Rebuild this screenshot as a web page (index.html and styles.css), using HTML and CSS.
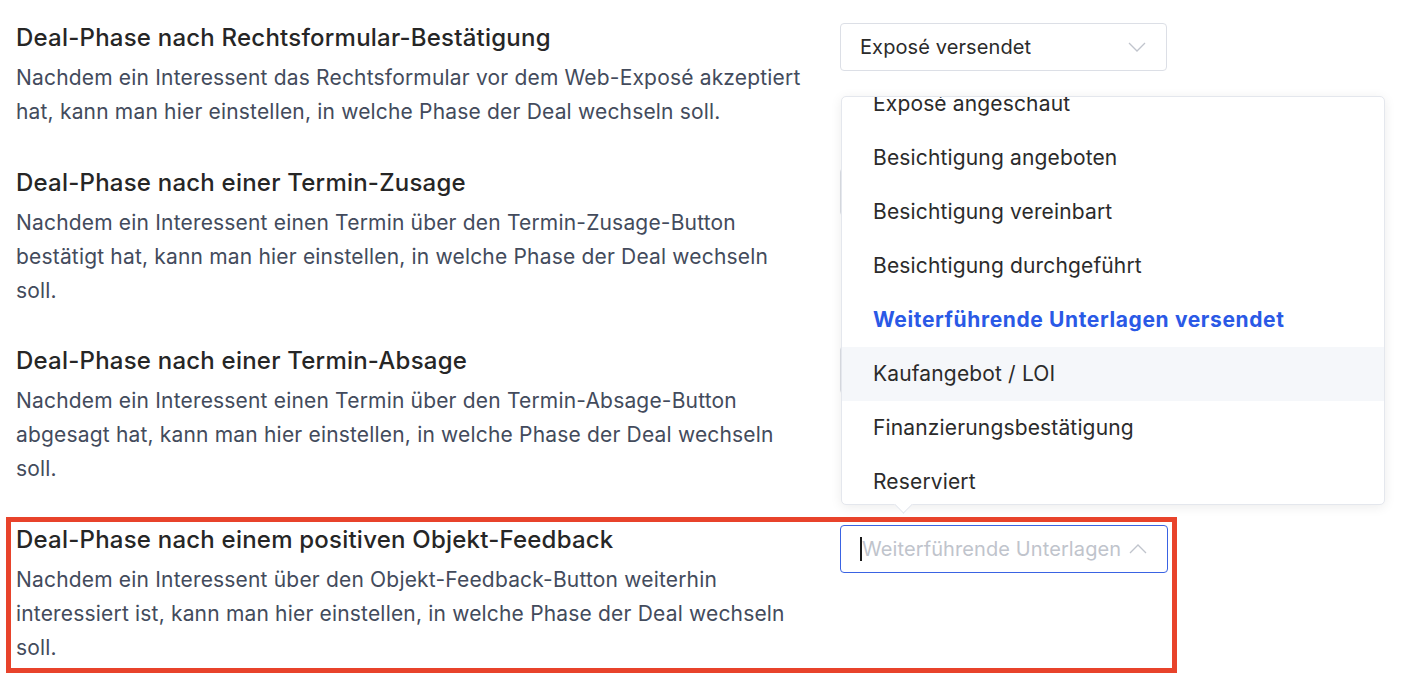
FILE: index.html
```html
<!DOCTYPE html>
<html lang="de">
    <head>
        <meta charset="UTF-8">
        <meta name="viewport" content="width=device-width, initial-scale=1.0">
        <title>Deal-Phasen</title>
        <link rel="stylesheet" href="styles.css">
    </head>
    <body>
        <div class="settings">
            <div class="setting-row">
                <div class="setting-text">
                    <h3 class="setting-title">Deal-Phase nach Rechtsformular-Bestätigung</h3>
                    <p class="setting-desc">Nachdem ein Interessent das Rechtsformular vor dem Web-Exposé akzeptiert hat, kann man hier einstellen, in welche Phase der Deal wechseln soll.</p>
                </div>
                <div class="select">
                    <span class="select-value">Exposé versendet</span>
                    <svg class="select-arrow" width="18" height="10" viewBox="0 0 18 10"><path d="M1 1l8 8 8-8" fill="none" stroke="#c0c4cc" stroke-width="1.3"/></svg>
                </div>
            </div>

            <div class="setting-row">
                <div class="setting-text">
                    <h3 class="setting-title">Deal-Phase nach einer Termin-Zusage</h3>
                    <p class="setting-desc">Nachdem ein Interessent einen Termin über den Termin-Zusage-Button bestätigt hat, kann man hier einstellen, in welche Phase der Deal wechseln soll.</p>
                </div>
                <div class="select">
                    <span class="select-value">Besichtigung vereinbart</span>
                    <svg class="select-arrow" width="18" height="10" viewBox="0 0 18 10"><path d="M1 1l8 8 8-8" fill="none" stroke="#c0c4cc" stroke-width="1.3"/></svg>
                </div>
            </div>

            <div class="setting-row">
                <div class="setting-text">
                    <h3 class="setting-title">Deal-Phase nach einer Termin-Absage</h3>
                    <p class="setting-desc">Nachdem ein Interessent einen Termin über den Termin-Absage-Button abgesagt hat, kann man hier einstellen, in welche Phase der Deal wechseln soll.</p>
                </div>
                <div class="select">
                    <span class="select-value">Exposé angeschaut</span>
                    <svg class="select-arrow" width="18" height="10" viewBox="0 0 18 10"><path d="M1 1l8 8 8-8" fill="none" stroke="#c0c4cc" stroke-width="1.3"/></svg>
                </div>
            </div>

            <div class="setting-row marked">
                <div class="setting-text">
                    <h3 class="setting-title">Deal-Phase nach einem positiven Objekt-Feedback</h3>
                    <p class="setting-desc">Nachdem ein Interessent über den Objekt-Feedback-Button weiterhin interessiert ist, kann man hier einstellen, in welche Phase der Deal wechseln soll.</p>
                </div>
                <div class="select-wrap">
                    <div class="dropdown">
                        <ul class="dropdown-list">
                            <li>Exposé angeschaut</li>
                            <li>Besichtigung angeboten</li>
                            <li>Besichtigung vereinbart</li>
                            <li>Besichtigung durchgeführt</li>
                            <li class="selected">Weiterführende Unterlagen versendet</li>
                            <li class="hover">Kaufangebot / LOI</li>
                            <li>Finanzierungsbestätigung</li>
                            <li>Reserviert</li>
                        </ul>
                        <span class="dropdown-arrow"></span>
                    </div>
                    <div class="select is-open">
                        <span class="select-value placeholder"><span class="caret"></span>Weiterführende Unterlagen versendet</span>
                        <svg class="select-arrow" width="18" height="10" viewBox="0 0 18 10"><path d="M1 9l8-8 8 8" fill="none" stroke="#c0c4cc" stroke-width="1.3"/></svg>
                    </div>
                </div>
            </div>
        </div>
    </body>
</html>
```

FILE: styles.css
```css
body{
    margin:0;
    background:#fff;
    font-family:Inter,"Noto Sans",sans-serif;
}
.settings{
    padding:23px 14px 0 14px;
}
.setting-row{
    display:flex;
    align-items:flex-start;
    width:1155px;
    padding:0 2px;
    box-sizing:border-box;
    margin-bottom:38.5px;
}
.setting-text{
    width:792px;
    flex-shrink:0;
}
.setting-title{
    margin:0 0 8px 0;
    font-size:24px;
    line-height:30px;
    font-weight:500;
    letter-spacing:0.22px;
    color:#262626;
}
.setting-desc{
    margin:0;
    font-size:21px;
    line-height:34px;
    letter-spacing:0.18px;
    color:#434b5c;
}
.select-wrap{
    position:relative;
    margin-left:32px;
}
.select{
    position:relative;
    width:328px;
    height:48px;
    margin-left:32px;
    box-sizing:border-box;
    border:1px solid #dcdfe6;
    border-radius:4px;
    display:flex;
    align-items:center;
    padding:0 46px 0 19px;
    overflow:hidden;
}
.select-wrap .select{
    margin-left:0;
}
.select.is-open{
    border-color:#3a63e3;
}
.select-value{
    font-size:20px;
    letter-spacing:0.1px;
    color:#2b2b2b;
    white-space:nowrap;
    overflow:hidden;
}
.select-value.placeholder{
    color:#c0c4cc;
    display:flex;
    align-items:center;
}
.caret{
    display:inline-block;
    width:2px;
    height:24px;
    background:#1a1a1a;
    flex-shrink:0;
}
.select-arrow{
    position:absolute;
    right:20px;
    top:18px;
}
.marked{
    outline:5px solid #e8432b;
    outline-offset:3px;
}
.dropdown{
    position:absolute;
    left:1px;
    bottom:68px;
    width:544px;
    height:409px;
    background:#fff;
    border:1px solid #e4e7ed;
    border-radius:5px;
    box-shadow:0 2px 12px rgba(0,0,0,0.08);
    box-sizing:border-box;
    z-index:5;
}
.dropdown-list{
    list-style:none;
    margin:0;
    padding:0;
    height:100%;
    overflow:hidden;
    border-radius:5px;
}
.dropdown-list li{
    height:54px;
    line-height:54px;
    padding-left:31px;
    font-size:21px;
    letter-spacing:0.15px;
    color:#2b2b2b;
    white-space:nowrap;
}
.dropdown-list li:first-child{
    margin-top:-20px;
}
.dropdown-list li.selected{
    color:#2a59e6;
    font-weight:700;
    letter-spacing:0.62px;
}
.dropdown-list li.hover{
    background:#f5f7fa;
}
.dropdown-arrow{
    position:absolute;
    left:55px;
    bottom:-7px;
    width:12px;
    height:12px;
    background:#fff;
    border-right:1px solid #e4e7ed;
    border-bottom:1px solid #e4e7ed;
    transform:rotate(45deg);
}
```
